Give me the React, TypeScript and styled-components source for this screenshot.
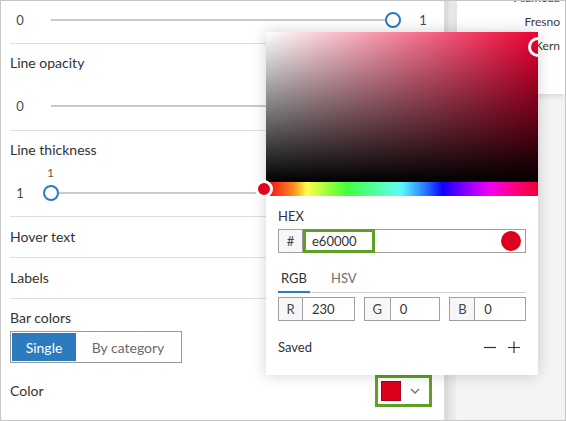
import React from 'react';
import styled, { createGlobalStyle } from 'styled-components';

const GlobalStyle = createGlobalStyle`
  html, body {
    margin: 0;
    padding: 0;
    overflow: hidden;
    background: #fff;
  }
  * {
    box-sizing: border-box;
  }
`;

const Frame = styled.div`
  position: relative;
  width: 566px;
  height: 421px;
  display: flex;
  border: 1px solid #c6c6c6;
  font-family: Lato, 'Noto Sans', sans-serif;
  color: #323232;
  overflow: hidden;
`;

const LeftPanel = styled.div`
  width: 443px;
  display: flex;
  flex-direction: column;
  padding-left: 9px;
  background: #fff;
`;

const Divider = styled.div`
  width: 4px;
  background: #dcdcdc;
`;

const RightPanel = styled.div`
  flex: 1;
  padding-left: 9px;
  display: flex;
  flex-direction: column;
  background: linear-gradient(90deg, #e2e2e2 0, #eeeeee 8px, #f4f4f4 9px);
`;

const ChartCard = styled.div`
  height: 94px;
  background: #fff;
  box-shadow: 0 2px 6px rgba(0, 0, 0, 0.12);
  margin-top: -1px;
  padding: 0 5px 0 0;
  display: flex;
  flex-direction: column;
  align-items: flex-end;
  font-size: 12px;
  color: #3a3a3a;
`;

const ChartLabel = styled.div`
  height: 24px;
  line-height: 24px;
  &:first-child {
    margin-top: -14px;
  }
`;

const Section = styled.div<{ $pt?: number; $pb?: number }>`
  border-bottom: 1px solid #dedede;
  padding-top: ${({ $pt }) => $pt ?? 0}px;
  padding-bottom: ${({ $pb }) => $pb ?? 0}px;
  display: flex;
  flex-direction: column;
`;

const Label = styled.div<{ $mt?: number }>`
  font-size: 14px;
  line-height: 20px;
  height: 20px;
  margin-top: ${({ $mt }) => $mt ?? 0}px;
`;

const SliderRow = styled.div<{ $mt?: number }>`
  display: flex;
  align-items: center;
  height: 20px;
  margin-top: ${({ $mt }) => $mt ?? 0}px;
  font-size: 13px;
  color: #4a4a4a;
`;

const EndLabel = styled.div<{ $ml?: number }>`
  width: 20px;
  text-align: center;
  margin-left: ${({ $ml }) => $ml ?? 0}px;
`;

const Track = styled.div`
  position: relative;
  width: 358px;
  margin-left: 13px;
  height: 20px;
  &::before {
    content: '';
    position: absolute;
    left: 8px;
    right: 8px;
    top: 9px;
    height: 2px;
    background: #c9c9c9;
  }
`;

const Thumb = styled.div<{ $pos: number }>`
  position: absolute;
  top: 2px;
  left: ${({ $pos }) => $pos}%;
  width: 16px;
  height: 16px;
  border-radius: 50%;
  border: 2.5px solid #2b7bbf;
  background: #fff;
  transform: translateX(${({ $pos }) => -$pos * 0.16}px);
`;

const Tick = styled.div`
  position: absolute;
  left: 6px;
  top: -21px;
  width: 1px;
  height: 5px;
  background: #2b7bbf;
`;

const ValueBubble = styled.div`
  height: 16px;
  line-height: 16px;
  margin-top: 5px;
  padding-left: 37px;
  font-size: 12px;
  color: #5a5a5a;
`;

const Segmented = styled.div`
  display: flex;
  width: 172px;
  height: 32px;
  border: 1px solid #9a9a9a;
  padding: 1px;
  margin-top: 3px;
`;

const Segment = styled.div<{ $active?: boolean }>`
  display: flex;
  align-items: center;
  justify-content: center;
  flex: ${({ $active }) => ($active ? '0 0 64px' : '1')};
  font-size: 14px;
  background: ${({ $active }) => ($active ? '#2c7bbf' : '#fff')};
  color: ${({ $active }) => ($active ? '#fff' : '#6a6a6a')};
`;

const ColorRow = styled.div`
  display: flex;
  align-items: center;
  justify-content: space-between;
  padding-right: 12px;
  margin-top: 12px;
`;

const ColorButton = styled.div`
  width: 57px;
  height: 32px;
  border: 3px solid #5fa024;
  display: flex;
  align-items: center;
  padding-left: 3px;
  gap: 9px;
`;

const Swatch = styled.div<{ $color: string }>`
  width: 20px;
  height: 20px;
  background: ${({ $color }) => $color};
  border: 1px solid #a8001a;
`;

const Popover = styled.div`
  position: absolute;
  left: 265px;
  top: 31px;
  width: 272px;
  height: 343px;
  background: #fff;
  box-shadow: 0 0 14px rgba(0, 0, 0, 0.18);
  display: flex;
  flex-direction: column;
`;

const SVArea = styled.div`
  position: relative;
  height: 150px;
  overflow: hidden;
  background: linear-gradient(to top, #000, rgba(0, 0, 0, 0)),
    linear-gradient(to right, #fff, #ee0033);
`;

const Ring = styled.div<{ $x: number; $y: number; $size: number; $fill?: string }>`
  position: absolute;
  left: ${({ $x }) => $x}px;
  top: ${({ $y }) => $y}px;
  width: ${({ $size }) => $size}px;
  height: ${({ $size }) => $size}px;
  border-radius: 50%;
  border: 3px solid #fff;
  background: ${({ $fill }) => $fill ?? 'transparent'};
  transform: translate(-50%, -50%);
`;

const HueBar = styled.div`
  position: relative;
  height: 14px;
  background: linear-gradient(
    to right,
    #f20020 0%,
    #ff8a1a 10%,
    #ffff4a 15%,
    #8aff3a 24%,
    #40ff40 30%,
    #5fffd8 46%,
    #5af8ff 50%,
    #2060ff 60%,
    #1000ff 65%,
    #9000ff 74%,
    #f000f8 82%,
    #ff0090 90%,
    #f20030 100%
  );
`;

const PopBody = styled.div`
  padding: 12px 12px 0 12px;
  display: flex;
  flex-direction: column;
`;

const SmallHeading = styled.div`
  font-size: 13px;
  line-height: 14px;
  margin-top: 1px;
`;

const HexBox = styled.div`
  position: relative;
  display: flex;
  align-items: center;
  height: 24px;
  margin-top: 6px;
  border: 1px solid #9f9f9f;
  font-size: 13px;
`;

const Prefix = styled.div<{ $w: number }>`
  width: ${({ $w }) => $w}px;
  align-self: stretch;
  display: flex;
  align-items: center;
  justify-content: center;
  background: #f7f7f7;
  border-right: 1px solid #9f9f9f;
  color: #444;
  font-size: 13px;
`;

const HexInput = styled.div`
  height: 24px;
  margin-top: -1px;
  margin-bottom: -1px;
  width: 72px;
  border: 3px solid #5fa024;
  display: flex;
  align-items: center;
  padding-left: 6px;
  color: #333;
`;

const Dot = styled.div`
  margin-left: auto;
  margin-right: 4px;
  width: 20px;
  height: 20px;
  border-radius: 50%;
  background: #dc001c;
`;

const Tabs = styled.div`
  display: flex;
  margin-top: 16px;
  border-bottom: 1px solid #cfcfcf;
`;

const Tab = styled.div<{ $active?: boolean }>`
  width: ${({ $active }) => ($active ? '32px' : 'auto')};
  margin-left: ${({ $active }) => ($active ? '0' : '21px')};
  text-align: center;
  font-size: 13px;
  height: 24px;
  line-height: 18px;
  color: ${({ $active }) => ($active ? '#323232' : '#6e6e6e')};
  border-bottom: 2px solid ${({ $active }) => ($active ? '#2b7bbf' : 'transparent')};
  margin-bottom: -1px;
`;

const ChannelRow = styled.div`
  display: flex;
  gap: 9px;
  margin-top: 4px;
`;

const Channel = styled.div`
  flex: 1;
  display: flex;
  height: 24px;
  border: 1px solid #9f9f9f;
  font-size: 13px;
`;

const ChannelValue = styled.div`
  display: flex;
  align-items: center;
  padding-left: 9px;
  color: #333;
`;

const SavedRow = styled.div`
  display: flex;
  align-items: center;
  justify-content: space-between;
  margin-top: 17px;
  font-size: 13px;
  height: 18px;
`;

const SavedActions = styled.div`
  display: flex;
  gap: 12px;
  padding-right: 6px;
  color: #333;
`;

const Chevron = () => (
  <svg width="10" height="6" viewBox="0 0 10 6">
    <path d="M1 1 L5 5 L9 1" fill="none" stroke="#6e6e6e" strokeWidth="1.3" />
  </svg>
);

const Minus = () => (
  <svg width="12" height="12" viewBox="0 0 12 12">
    <path d="M0 6.5 H12" stroke="#333" strokeWidth="1.2" />
  </svg>
);

const Plus = () => (
  <svg width="12" height="12" viewBox="0 0 12 12">
    <path d="M0 6.5 H12 M6 0.5 V12.5" stroke="#333" strokeWidth="1.2" />
  </svg>
);

const channels = [
  { key: 'R', value: '230', w: 24 },
  { key: 'G', value: '0', w: 26 },
  { key: 'B', value: '0', w: 25 },
];

export default function App() {
  return (
    <>
      <GlobalStyle />
      <Frame>
        <LeftPanel>
          <Section $pt={9} $pb={13}>
            <SliderRow>
              <EndLabel>0</EndLabel>
              <Track>
                <Thumb $pos={100}>
                  <Tick />
                </Thumb>
              </Track>
              <EndLabel $ml={12}>1</EndLabel>
            </SliderRow>
          </Section>
          <Section $pt={9} $pb={14}>
            <Label>Line opacity</Label>
            <SliderRow $mt={23}>
              <EndLabel>0</EndLabel>
              <Track />
            </SliderRow>
          </Section>
          <Section $pt={9} $pb={13}>
            <Label>Line thickness</Label>
            <ValueBubble>1</ValueBubble>
            <SliderRow $mt={2}>
              <EndLabel>1</EndLabel>
              <Track>
                <Thumb $pos={0} />
              </Track>
            </SliderRow>
          </Section>
          <Section $pt={10} $pb={10}>
            <Label>Hover text</Label>
          </Section>
          <Section $pt={10} $pb={10}>
            <Label>Labels</Label>
          </Section>
          <Label $mt={9}>Bar colors</Label>
          <Segmented>
            <Segment $active>Single</Segment>
            <Segment>By category</Segment>
          </Segmented>
          <ColorRow>
            <Label>Color</Label>
            <ColorButton>
              <Swatch $color="#dc001c" />
              <Chevron />
            </ColorButton>
          </ColorRow>
        </LeftPanel>
        <Divider />
        <RightPanel>
          <ChartCard>
            <ChartLabel>Alameda</ChartLabel>
            <ChartLabel>Fresno</ChartLabel>
            <ChartLabel>Kern</ChartLabel>
          </ChartCard>
        </RightPanel>

        <Popover>
          <SVArea>
            <Ring $x={272} $y={15} $size={20} />
          </SVArea>
          <HueBar>
            <Ring $x={-2} $y={7} $size={18} $fill="#e8001a" />
          </HueBar>
          <PopBody>
            <SmallHeading>HEX</SmallHeading>
            <HexBox>
              <Prefix $w={24}>#</Prefix>
              <HexInput>e60000</HexInput>
              <Dot />
            </HexBox>
            <Tabs>
              <Tab $active>RGB</Tab>
              <Tab>HSV</Tab>
            </Tabs>
            <ChannelRow>
              {channels.map((c) => (
                <Channel key={c.key}>
                  <Prefix $w={c.w}>{c.key}</Prefix>
                  <ChannelValue>{c.value}</ChannelValue>
                </Channel>
              ))}
            </ChannelRow>
            <SavedRow>
              <span>Saved</span>
              <SavedActions>
                <Minus />
                <Plus />
              </SavedActions>
            </SavedRow>
          </PopBody>
        </Popover>
      </Frame>
    </>
  );
}
